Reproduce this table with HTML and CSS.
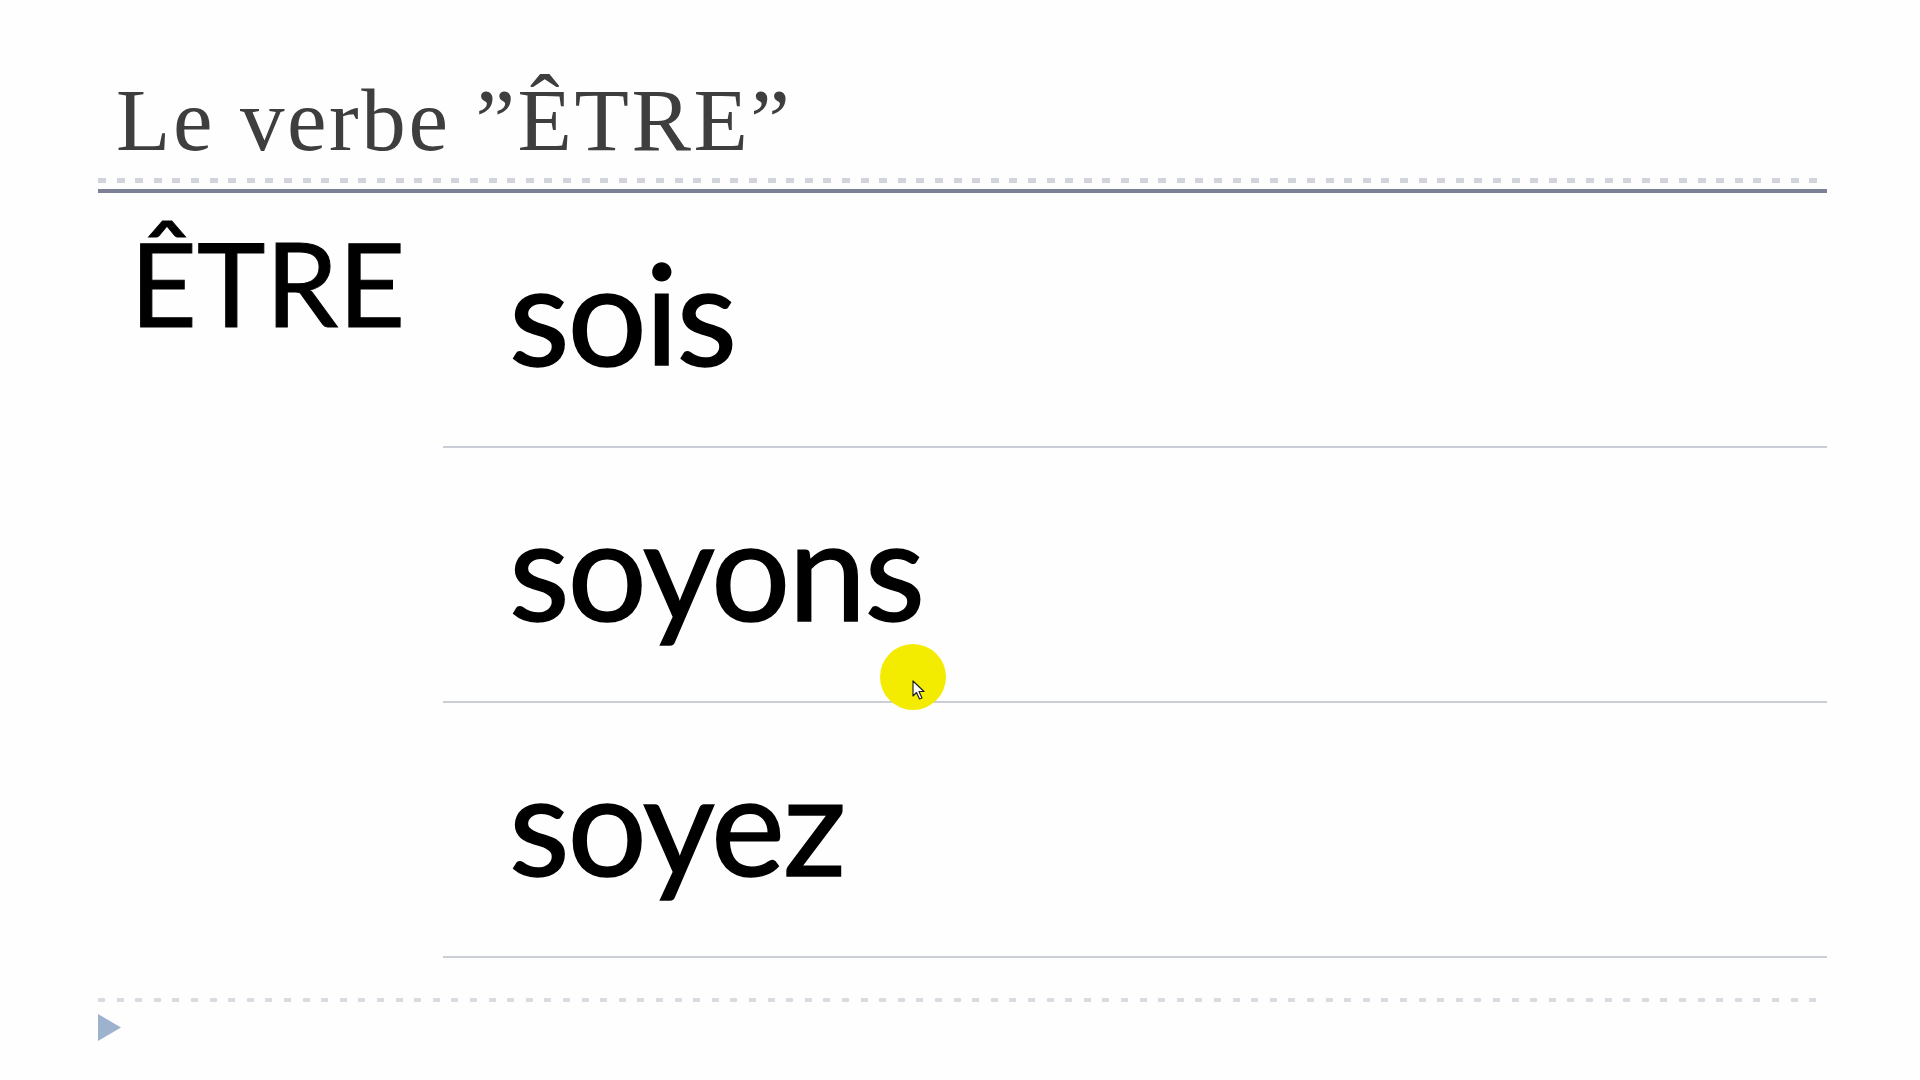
FILE: index.html
```html
<!DOCTYPE html>
<html lang="fr">
<head>
<meta charset="utf-8">
<title>Le verbe ÊTRE</title>
<link rel="stylesheet" href="styles.css">
</head>
<body>
<div class="slide">
  <h1 class="title">Le verbe ”ÊTRE”</h1>
  <div class="dots"></div>
  <div class="solid"></div>
  <div class="content">
    <div class="verb">ÊTRE</div>
    <div class="forms">
      <div class="form">sois</div>
      <div class="form">soyons</div>
      <div class="form">soyez</div>
    </div>
  </div>
  <div class="dots dots-bottom"></div>
  <div class="footer">
    <svg class="tri" width="23" height="27" viewBox="0 0 23 27"><polygon points="0,0 23,13.5 0,27" fill="#9db2cd"/></svg>
  </div>
  <div class="pointer">
    <svg class="arrow" width="14" height="20" viewBox="0 0 14 20"><path d="M1 1 L1 16 L4.5 12.5 L7.5 19 L10 18 L7 11.5 L12 11.5 Z" fill="#fff" stroke="#222" stroke-width="1.2" stroke-linejoin="round"/></svg>
  </div>
</div>
</body>
</html>
```

FILE: styles.css
```css
html, body {
  margin: 0;
  padding: 0;
  background: #fefefe;
}
.slide {
  position: relative;
  width: 1920px;
  height: 1080px;
  box-sizing: border-box;
  padding: 76px 93px 0 98px;
  display: flex;
  flex-direction: column;
  overflow: hidden;
}
.title {
  margin: 0 0 13px 18px;
  font-family: "Liberation Serif", "Times New Roman", serif;
  font-weight: normal;
  font-size: 89px;
  line-height: 89px;
  letter-spacing: 2.6px;
  color: #3e3e3e;
}
.dots {
  height: 5px;
  background-image: repeating-linear-gradient(to right, #d2d4dc 0, #d2d4dc 8px, transparent 8px, transparent 18.6px);
}
.solid {
  margin-top: 6px;
  height: 4px;
  background: #7d8196;
}
.content {
  display: flex;
}
.verb {
  width: 313px;
  padding: 20px 0 0 32px;
  font-family: Lato, "Open Sans", sans-serif;
  font-size: 116px;
  line-height: 1.2;
  color: #000;
  -webkit-text-stroke: 1px #000;
}
.forms {
  flex: 1;
  display: flex;
  flex-direction: column;
}
.form {
  box-sizing: border-box;
  height: 255px;
  padding: 35px 0 0 66px;
  border-bottom: 2px solid #cbced6;
  font-family: Lato, "Open Sans", sans-serif;
  font-size: 140px;
  line-height: 1.2;
  letter-spacing: -2px;
  color: #000;
  -webkit-text-stroke: 1.5px #000;
}
.dots-bottom {
  margin-top: 40px;
  height: 4px;
  background-image: repeating-linear-gradient(to right, #d8dbe2 0, #d8dbe2 7px, transparent 7px, transparent 18.6px);
}
.footer {
  display: flex;
  padding-top: 12px;
}
.tri {
  display: block;
}
.pointer {
  position: absolute;
  left: 880px;
  top: 644px;
  width: 66px;
  height: 66px;
  border-radius: 50%;
  background: #f3ec00;
}
.arrow {
  position: absolute;
  left: 32px;
  top: 36px;
}
```
